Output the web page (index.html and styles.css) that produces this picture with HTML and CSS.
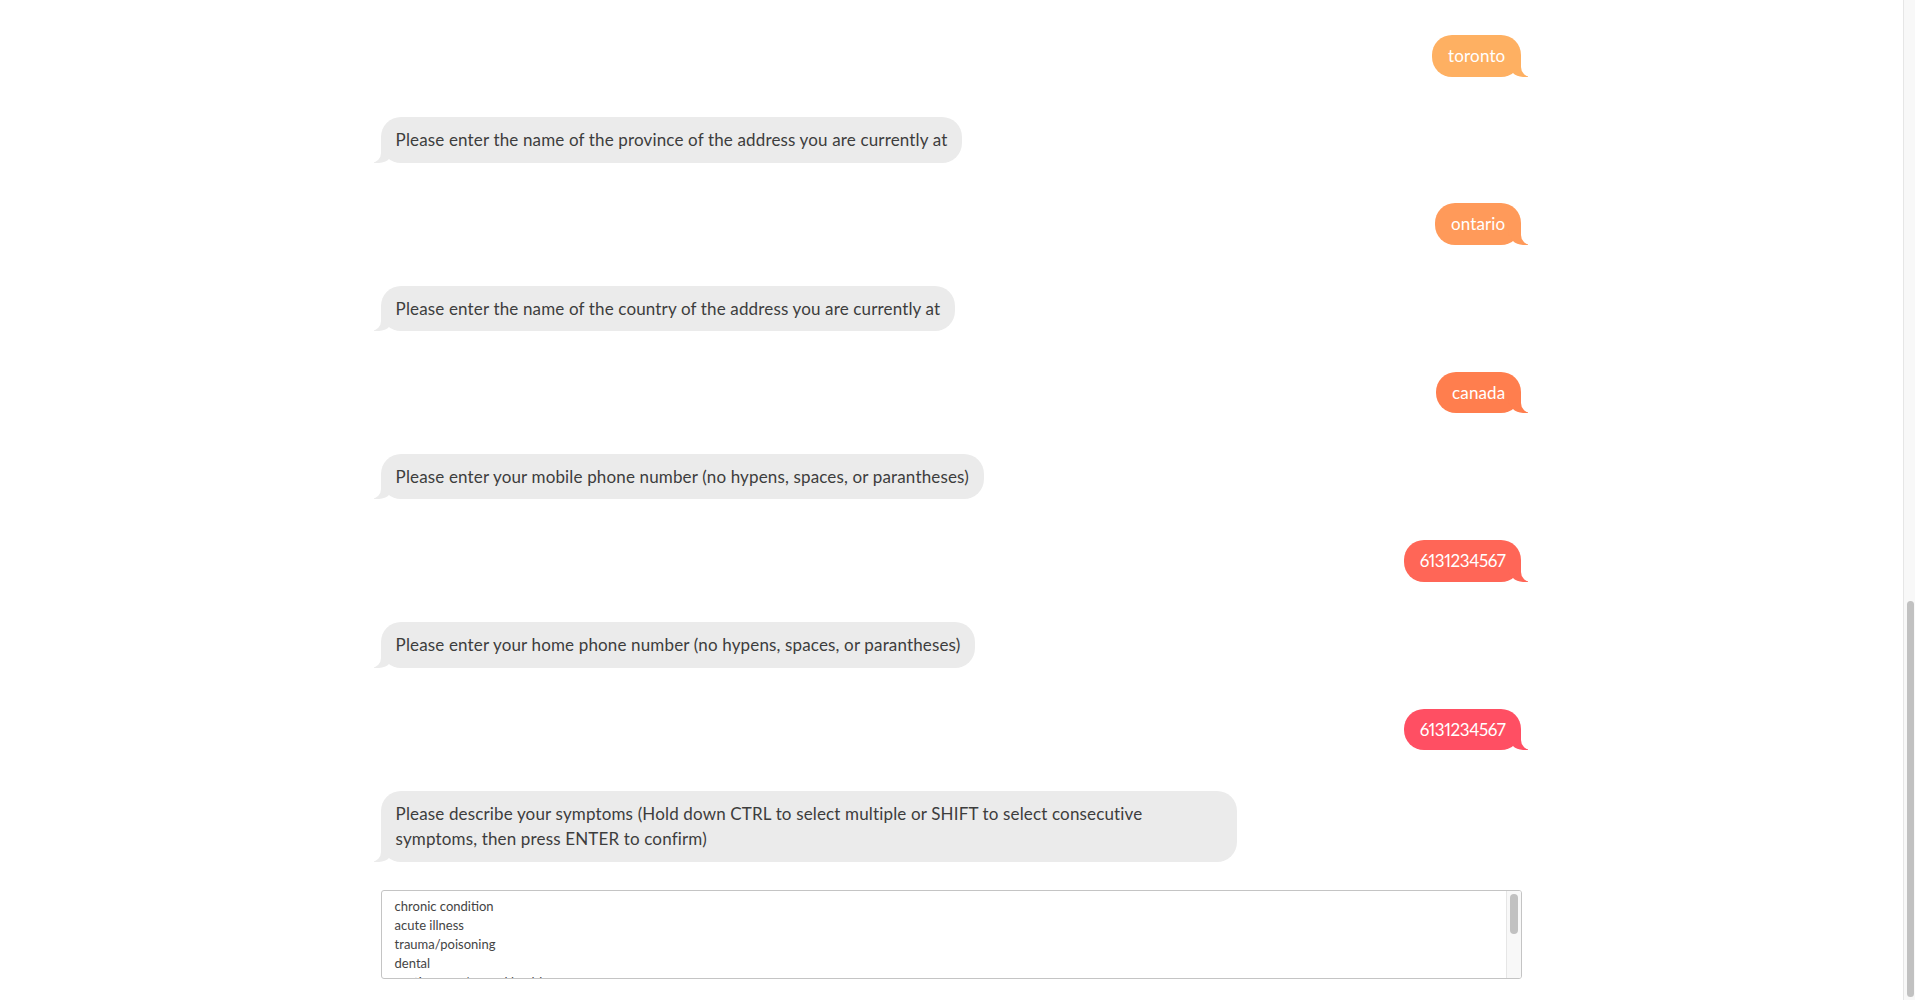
FILE: index.html
```html
<!DOCTYPE html>
<html lang="en">
<head>
<meta charset="utf-8">
<title>Chat</title>
<link rel="stylesheet" href="styles.css">
</head>
<body>
<div class="app">
  <main class="chat">
    <div class="column">
      <div class="thread">
        <div class="msg me c1">toronto</div>
        <div class="msg bot">Please enter the name of the province of the address you are currently at</div>
        <div class="msg me c2">ontario</div>
        <div class="msg bot">Please enter the name of the country of the address you are currently at</div>
        <div class="msg me c3">canada</div>
        <div class="msg bot">Please enter your mobile phone number (no hypens, spaces, or parantheses)</div>
        <div class="msg me num c4">6131234567</div>
        <div class="msg bot">Please enter your home phone number (no hypens, spaces, or parantheses)</div>
        <div class="msg me num c5">6131234567</div>
        <div class="msg bot">Please describe your symptoms (Hold down CTRL to select multiple or SHIFT to select consecutive symptoms, then press ENTER to confirm)</div>
      </div>
      <div class="answer">
        <div class="listbox" role="listbox" aria-multiselectable="true">
          <div class="options">
            <div class="option" role="option">chronic condition</div>
            <div class="option" role="option">acute illness</div>
            <div class="option" role="option">trauma/poisoning</div>
            <div class="option" role="option">dental</div>
            <div class="option" role="option">routine care/mental health</div>
            <div class="option" role="option">other</div>
          </div>
          <div class="lb-track"><div class="lb-thumb"></div></div>
        </div>
      </div>
    </div>
  </main>
  <div class="page-scroll"><div class="page-thumb"></div></div>
</div>
</body>
</html>
```
FILE: styles.css
```css
html, body {
  margin: 0;
  padding: 0;
  height: 100%;
  background: #ffffff;
}
body {
  font-family: Lato, "Open Sans", "Liberation Sans", sans-serif;
  font-variant-numeric: proportional-nums;
  overflow: hidden;
}
.app {
  display: flex;
  height: 100vh;
}
.chat {
  flex: 1;
  min-width: 0;
  overflow: hidden;
}
.column {
  width: 60%;
  margin: 0 auto;
  padding-top: 35px;
}
.thread {
  display: flex;
  flex-direction: column;
  gap: 40.7px;
}
.msg {
  position: relative;
  max-width: 75%;
  box-sizing: border-box;
  border-radius: 20px;
  font-size: 17px;
  line-height: 25.5px;
  letter-spacing: 0.15px;
  background: var(--bg);
}
.msg::before,
.msg::after {
  content: "";
  position: absolute;
  bottom: 0;
  height: 20px;
}
.me {
  align-self: flex-end;
  margin-right: 1px;
  padding: 8px 16px;
  color: #ffffff;
}
.num {
  letter-spacing: -0.4px;
}
.me::before {
  right: -7px;
  width: 20px;
  background: var(--bg);
  border-bottom-left-radius: 15px;
  z-index: 0;
}
.me::after {
  right: -10px;
  width: 10px;
  background: #ffffff;
  border-bottom-left-radius: 10px;
  z-index: 1;
}
.bot {
  align-self: flex-start;
  padding: 10px 15px;
  color: #3d3d3d;
  --bg: #ebebeb;
}
.bot::before {
  left: -7px;
  width: 20px;
  background: var(--bg);
  border-bottom-right-radius: 15px;
  z-index: 0;
}
.bot::after {
  left: -10px;
  width: 10px;
  background: #ffffff;
  border-bottom-right-radius: 10px;
  z-index: 1;
}
.c1 { --bg: #feb062; }
.c2 { --bg: #ff9a5a; }
.c3 { --bg: #ff7e4e; }
.c4 { --bg: #ff6657; }
.c5 { --bg: #ff4f63; }

.answer {
  margin-top: 28px;
}
.listbox {
  display: flex;
  height: 89px;
  box-sizing: border-box;
  border: 1px solid #c4c4c4;
  border-radius: 3px;
  overflow: hidden;
  background: #ffffff;
}
.options {
  flex: 1;
  overflow: hidden;
  padding: 6px 13px;
  font-size: 13px;
  line-height: 19px;
  color: #444444;
}
.lb-track {
  width: 15px;
  box-sizing: border-box;
  border-left: 1px solid #e6e6e6;
  background: #f8f8f8;
  padding: 3px 2px 0 3px;
}
.lb-thumb {
  width: 8px;
  height: 40px;
  border-radius: 4px;
  background: #c1c1c1;
}
.page-scroll {
  width: 12px;
  flex: none;
  box-sizing: border-box;
  border-left: 1px solid #e6e6e6;
  background: #f8f8f8;
  display: flex;
  flex-direction: column;
  justify-content: flex-end;
  padding: 0 1px 3px 3px;
}
.page-thumb {
  width: 7px;
  height: 396px;
  border-radius: 4px;
  background: #c1c1c1;
}
```
